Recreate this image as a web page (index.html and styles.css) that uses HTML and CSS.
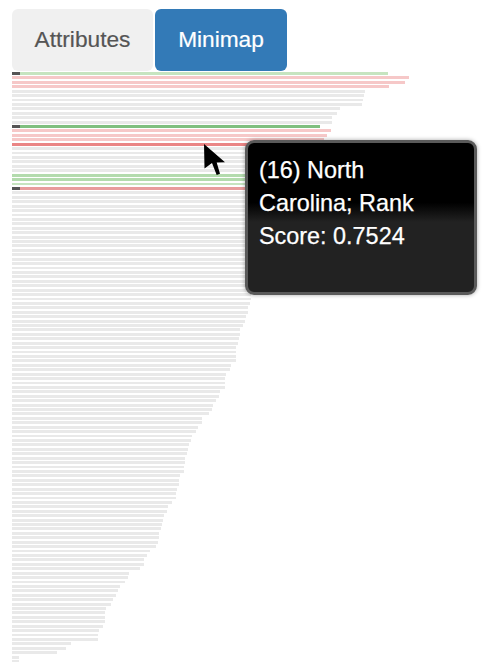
FILE: index.html
```html
<!DOCTYPE html>
<html lang="en">
<head>
<meta charset="utf-8">
<title>Minimap</title>
<link rel="stylesheet" href="styles.css">
</head>
<body>
<div class="page">
  <nav class="tabs">
    <a class="tab">Attributes</a>
    <a class="tab tab-active">Minimap</a>
  </nav>
  <div class="minimap" id="minimap"></div>
  <svg class="cursor" width="24" height="34" viewBox="0 0 24 34" aria-hidden="true">
    <path d="M1 1 L1.5 25.5 L9 20 L13.7 32 L17 30.8 L13.7 19.5 L22 19.3 Z" fill="#000"/>
  </svg>
  <div class="tooltip">(16) North Carolina; Rank Score: 0.7524</div>
</div>
<script src="minimap.js"></script>
</body>
</html>
```
FILE: styles.css
```css
html, body {
  margin: 0;
  padding: 0;
  background: #fff;
}
.page {
  position: relative;
  width: 489px;
  height: 662px;
  overflow: hidden;
  font-family: "Liberation Sans", Arial, sans-serif;
}
.tabs {
  display: flex;
  gap: 2px;
  padding: 9px 0 0 12px;
  height: 63px;
  box-sizing: border-box;
}
.tab {
  display: flex;
  align-items: center;
  justify-content: center;
  height: 62px;
  width: 141px;
  border-radius: 6px;
  background: #f0f0f0;
  color: #555;
  font-size: 22.7px;
  padding-bottom: 2px;
  box-sizing: border-box;
  -webkit-text-stroke: 0.2px currentColor;
}
.tab-active {
  width: 132px;
  background: #337ab7;
  color: #fff;
}
.minimap {
  display: flex;
  flex-direction: column;
  padding-left: 12px;
  margin-top: 9px;
}
.row {
  position: relative;
  height: 4.43px;
  flex: none;
}
.bar {
  height: 2.9px;
  background: #e9e9e9;
}
.bar-pink { background: #f6c8c8; }
.bar-green-light { background: #c6e4c0; }
.bar-green { background: #b3dbad; }
.bar-green-strong { background: #7fbf7f; }
.bar-red { background: #ea8585; }
.bar-red-soft { background: #e89c9c; }
.marker {
  position: absolute;
  left: 0;
  top: 0;
  width: 8px;
  height: 2.9px;
  background: #555;
}
.cursor {
  position: absolute;
  left: 203px;
  top: 143px;
}
.tooltip {
  position: absolute;
  left: 245px;
  top: 140px;
  width: 232px;
  height: 155px;
  box-sizing: border-box;
  padding: 11px 40px 0 11px;
  border: 3px solid #5a5a5a;
  border-radius: 9px;
  background: linear-gradient(#000 0, #000 40%, #222 53%, #222 100%);
  box-shadow: 0 0 4px rgba(0, 0, 0, 0.35);
  color: #fff;
  font-size: 23.4px;
  line-height: 33px;
  -webkit-text-stroke: 0.25px currentColor;
}
```
FILE: minimap.js
```js
var widths = [
  376, 397, 393, 377, 353, 352, 351, 350, 328, 325, 320, 320,
  308, 319, 315, 312, 308, 304, 300, 296, 292, 288, 284, 280,
  276, 272, 268, 264, 260, 258, 256, 254, 252, 251, 250, 249,
  248, 248, 247, 247, 246, 246, 245, 245, 244, 243, 242, 241,
  240, 239, 239, 239, 238, 236, 236, 234,
  233, 231, 228, 228, 226.7, 226, 224, 224, 224, 223.7, 219, 218, 214, 213, 213, 213, 208, 207, 204, 201, 200, 197, 190, 190, 186, 184, 180,
  179, 177, 176, 175, 173, 173, 172, 172, 168, 167, 167, 165, 164, 164, 160, 156, 155, 152, 151, 150, 149, 147, 147, 146, 144,
  138, 135, 132, 132, 128, 117, 116, 113, 108, 106, 104, 101, 99, 94, 93, 93, 93, 91, 87, 86, 86, 59, 54, 45, 7, 7
];
var kinds = {
  0: ["bar-green-light", true],
  1: ["bar-pink"], 2: ["bar-pink"], 3: ["bar-pink"],
  12: ["bar-green-strong", true],
  13: ["bar-pink"], 14: ["bar-pink"], 15: ["bar-pink"],
  16: ["bar-red"],
  23: ["bar-green"], 24: ["bar-green"], 25: ["bar-green-light"],
  26: ["bar-red-soft", true]
};
var map = document.getElementById("minimap");
widths.forEach(function (w, i) {
  var row = document.createElement("div");
  row.className = "row";
  var bar = document.createElement("div");
  var kind = kinds[i];
  bar.className = "bar" + (kind ? " " + kind[0] : "");
  bar.style.width = w + "px";
  row.appendChild(bar);
  if (kind && kind[1]) {
    var marker = document.createElement("div");
    marker.className = "marker";
    row.appendChild(marker);
  }
  map.appendChild(row);
});
```
